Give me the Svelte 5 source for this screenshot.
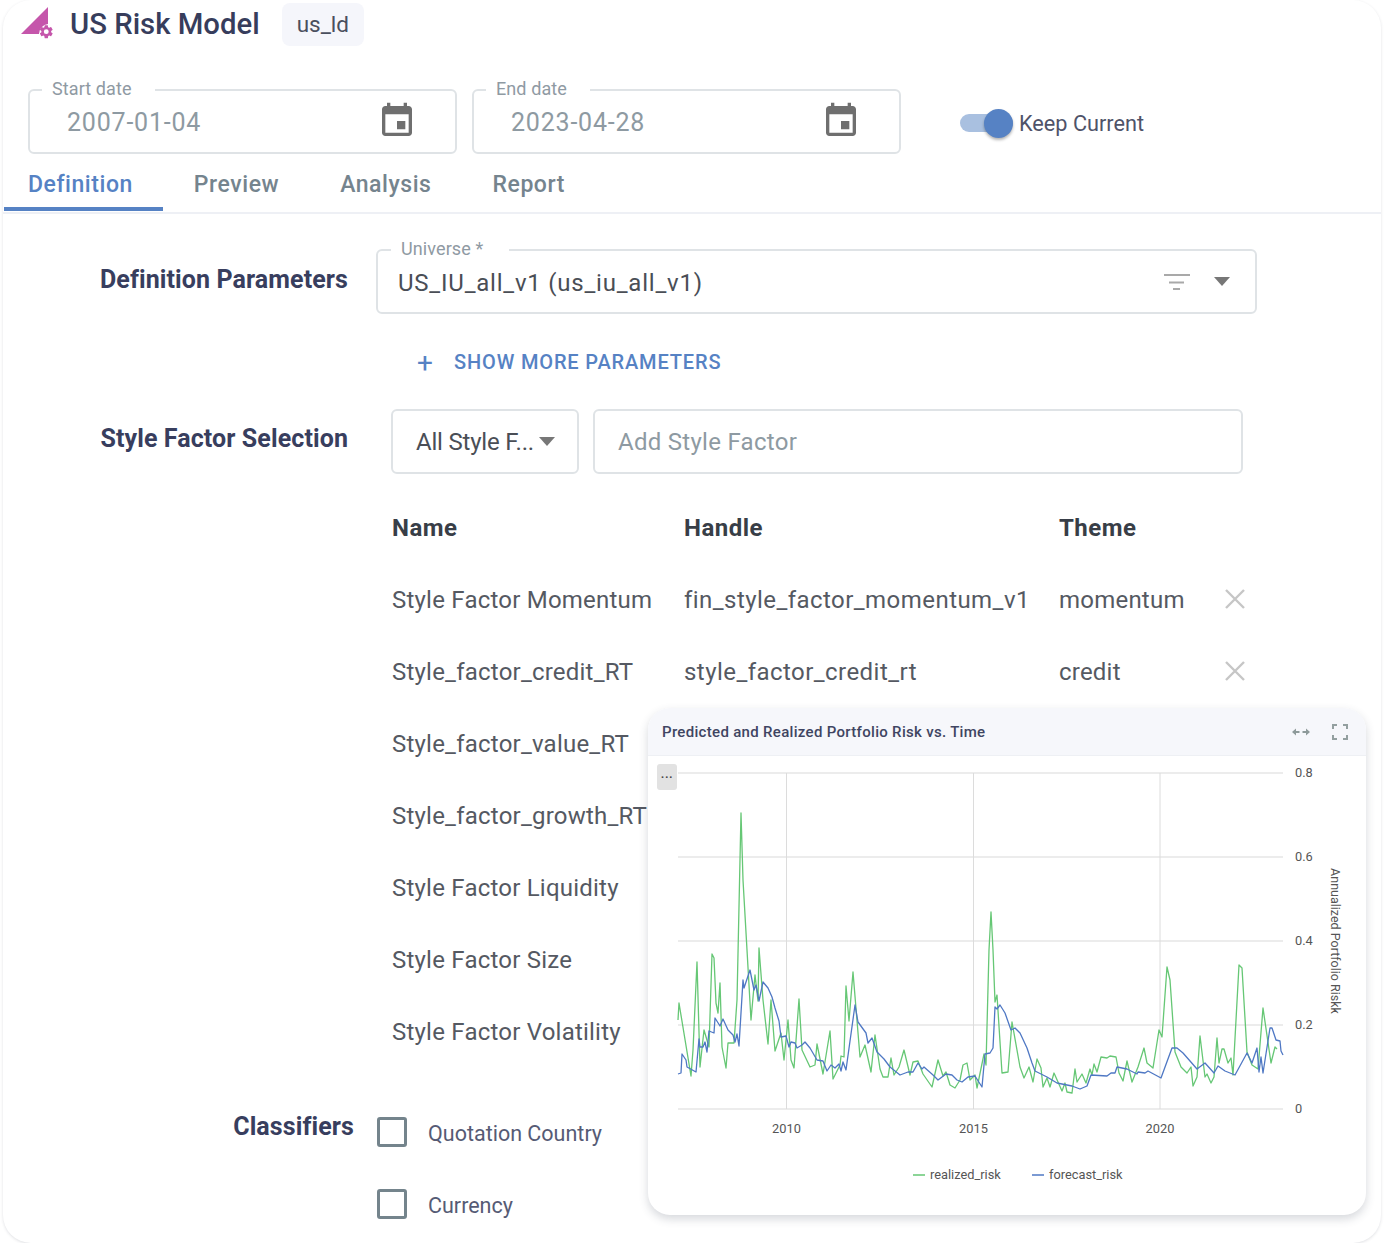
<script>
  const green = "678,1020 679,1003 691,1076 693,1050 697,962 700,1067 704,1030 709,1047 712,954 714,958 716,1003 718,1013 720,983 722,1047 726,1068 728,1043 734,1043 737,1000 741,813 743,880 747,950 751,1020 755,975 758,1001 759,948 763,1000 768,1044 771,1000 775,1051 781,1033 784,1060 788,1020 791,1060 794,1068 799,999 802,1050 810,1067 815,1065 817,1044 823,1074 830,1031 833,1079 840,1065 841,1056 844,1057 846,986 849,1021 853,972 860,1057 865,1045 871,1072 875,1035 880,1069 883,1077 888,1077 891,1058 894,1075 899,1067 904,1050 910,1075 913,1062 918,1061 923,1074 932,1087 938,1060 943,1076 946,1072 950,1085 955,1088 960,1080 963,1065 967,1063 970,1080 975,1075 977,1088 984,1054 986,1065 989,950 991,912 993,950 995,1002 997,995 1002,1073 1008,1072 1012,1022 1020,1067 1024,1078 1029,1067 1033,1082 1037,1059 1041,1068 1043,1087 1047,1078 1050,1087 1054,1073 1062,1091 1065,1083 1067,1092 1072,1093 1075,1069 1077,1082 1082,1074 1086,1083 1090,1069 1092,1075 1094,1064 1097,1072 1101,1057 1107,1058 1110,1056 1116,1057 1119,1073 1123,1081 1127,1061 1132,1082 1138,1067 1144,1048 1147,1063 1153,1068 1159,1030 1162,1037 1167,967 1170,980 1175,1052 1181,1067 1187,1073 1191,1067 1193,1086 1197,1077 1200,1036 1205,1077 1207,1074 1211,1083 1214,1077 1217,1038 1219,1063 1222,1049 1224,1049 1228,1063 1231,1058 1233,1075 1239,965 1242,968 1247,1052 1252,1065 1258,1069 1263,1008 1271,1063 1275,1047 1277,1049";
  const blue = "678,1074 681,1073 682,1054 686,1060 687,1067 696,1072 699,1039 700,1047 703,1047 705,1042 707,1052 709,1031 714,1033 715,1018 720,1026 723,1019 728,1030 733,1035 735,1042 737,1034 739,1046 743,980 744,988 750,970 754,990 756,985 759,1001 763,982 768,988 772,997 775,1008 779,1021 781,1037 786,1036 789,1047 791,1042 795,1043 797,1048 802,1045 805,1042 810,1048 817,1060 823,1061 827,1071 831,1065 835,1068 839,1064 841,1071 843,1062 846,1070 855,1005 858,1022 866,1033 868,1043 872,1038 877,1052 884,1059 890,1067 900,1075 908,1072 913,1072 918,1063 922,1069 924,1067 933,1075 938,1080 946,1074 952,1075 957,1080 962,1082 968,1077 975,1076 982,1087 985,1054 990,1053 993,1048 995,1007 997,1009 1000,1005 1005,1013 1011,1030 1015,1028 1020,1033 1027,1048 1032,1063 1035,1071 1047,1077 1057,1083 1072,1086 1080,1089 1087,1086 1091,1075 1107,1076 1111,1073 1115,1073 1117,1067 1127,1069 1137,1074 1138,1072 1145,1073 1148,1071 1161,1078 1172,1048 1177,1048 1183,1053 1197,1069 1205,1063 1214,1073 1218,1066 1225,1071 1235,1075 1247,1053 1252,1063 1257,1048 1259,1072 1261,1057 1263,1073 1270,1028 1272,1028 1276,1040 1280,1041 1281,1051 1283,1055";
  const hLines = [[773, "0.8"], [857, "0.6"], [941, "0.4"], [1025, "0.2"], [1109, "0"]];
  const vLines = [[786.5, "2010"], [973.5, "2015"], [1160, "2020"]];
  const rows = [
    ["Style Factor Momentum", "fin_style_factor_momentum_v1", "momentum"],
    ["Style_factor_credit_RT", "style_factor_credit_rt", "credit"],
    ["Style_factor_value_RT"],
    ["Style_factor_growth_RT"],
    ["Style Factor Liquidity"],
    ["Style Factor Size"],
    ["Style Factor Volatility"]
  ];
  const eventIcon = "M17 12h-5v5h5v-5zM16 1v2H8V1H6v2H5c-1.11 0-1.99.9-1.99 2L3 19c0 1.1.89 2 2 2h14c1.1 0 2-.9 2-2V5c0-1.1-.9-2-2-2h-1V1h-2zm3 18H5V8h14v11z";
  const gear = "M19.14 12.94c.04-.3.06-.61.06-.94 0-.32-.02-.64-.07-.94l2.03-1.58a.49.49 0 0 0 .12-.61l-1.92-3.32a.49.49 0 0 0-.59-.22l-2.39.96a7 7 0 0 0-1.62-.94l-.36-2.54a.48.48 0 0 0-.48-.41h-3.84a.47.47 0 0 0-.47.41l-.36 2.54a7.3 7.3 0 0 0-1.62.94l-2.39-.96a.48.48 0 0 0-.59.22L2.74 8.87a.47.47 0 0 0 .12.61l2.03 1.58c-.05.3-.09.63-.09.94s.02.64.07.94l-2.03 1.58a.49.49 0 0 0-.12.61l1.92 3.32c.12.22.37.29.59.22l2.39-.96c.5.38 1.03.7 1.62.94l.36 2.54c.05.24.24.41.48.41h3.84c.24 0 .44-.17.47-.41l.36-2.54a7 7 0 0 0 1.62-.94l2.39.96c.22.08.47 0 .59-.22l1.92-3.32a.47.47 0 0 0-.12-.61l-2.01-1.58zM12 15.6A3.6 3.6 0 1 1 12 8.4a3.6 3.6 0 0 1 0 7.2z";
</script>

<div class="card">
  <header class="head">
    <svg class="logo" viewBox="0 0 40 34" aria-hidden="true">
      <path d="M1 28 28 1v17a10 10 0 0 0-9 10z" fill="#c556ab" />
      <path d={gear} transform="translate(18.1 17.5) scale(.68)" fill="#c556ab" />
    </svg>
    <h1>US Risk Model</h1>
    <span class="badge">us_ld</span>
  </header>

  <div class="dates">
    {#each [["Start date", "2007-01-04"], ["End date", "2023-04-28"]] as d}
      <div class="date">
        <span class="float">{d[0]}</span>
        <span class="dval">{d[1]}</span>
        <svg class="cal" viewBox="0 0 24 24" aria-hidden="true"><path d={eventIcon} fill="#6f6f6f" /></svg>
      </div>
    {/each}
    <div class="keep">
      <span class="switch"><span class="thumb"></span></span>
      <span class="keep-label">Keep Current</span>
    </div>
  </div>

  <nav class="tabs">
    <span class="tab on">Definition</span>
    <span class="tab">Preview</span>
    <span class="tab">Analysis</span>
    <span class="tab">Report</span>
  </nav>

  <section class="sec-def">
    <h2>Definition Parameters</h2>
    <div class="universe">
      <span class="float">Universe *</span>
      <span class="uval">US_IU_all_v1 (us_iu_all_v1)</span>
      <svg class="filter" viewBox="0 0 26 18" aria-hidden="true">
        <path d="M0 2h26M5 9.500h15M9 16h7" stroke="#a9a9a9" stroke-width="2.200" />
      </svg>
      <span class="caret"></span>
    </div>
  </section>

  <div class="more"><span class="plus">+</span><span>SHOW MORE PARAMETERS</span></div>

  <section class="sec-style">
    <h2>Style Factor Selection</h2>
    <div class="sel"><span>All Style F...</span><span class="caret"></span></div>
    <div class="add">Add Style Factor</div>
  </section>

  <div class="table">
    <div class="tr th"><span>Name</span><span>Handle</span><span>Theme</span></div>
    {#each rows as r}
      <div class="tr">
        <span class="nm">{r[0]}</span>
        <span class="hd">{r[1] ?? ""}</span>
        <span>{r[2] ?? ""}</span>
        {#if r[1]}
          <svg class="x" viewBox="0 0 20 20" aria-hidden="true"><path d="M1 1l18 18M19 1 1 19" stroke="#c6c6c6" stroke-width="2.400" /></svg>
        {/if}
      </div>
    {/each}
  </div>

  <section class="sec-class">
    <h2>Classifiers</h2>
    <div class="checks">
      <label class="chk"><span class="box"></span><span class="chk-label">Quotation Country</span></label>
      <label class="chk"><span class="box"></span><span class="chk-label">Currency</span></label>
    </div>
  </section>

  <aside class="chart">
    <div class="chart-head">
      <span class="chart-title">Predicted and Realized Portfolio Risk vs. Time</span>
      <svg class="arrows" viewBox="0 0 18 8" aria-hidden="true">
        <path d="M0 4 4 .500V3h3.500v2H4v2.500zM18 4l-4-3.500V3h-3.500v2H14v2.500z" fill="#8e9a9a" />
      </svg>
      <svg class="full" viewBox="0 0 16 16" aria-hidden="true">
        <path d="M1 5V1h4M11 1h4v4M1 11v4h4M15 11v4h-4" fill="none" stroke="#94a0a0" stroke-width="2" />
      </svg>
    </div>
    <div class="plot">
      <button class="dots" type="button">...</button>
      <svg class="plot-svg" viewBox="648 756 718 459" aria-label="Line chart of realized and forecast risk">
        {#each hLines as l}
          <line x1="678" x2="1283" y1={l[0]} y2={l[0]} stroke="#e6e6e6" stroke-width="1.500" />
          <text x="1295" y={l[0] + 4} class="tick">{l[1]}</text>
        {/each}
        {#each vLines as l}
          <line x1={l[0]} x2={l[0]} y1="773" y2="1109" stroke="#dcdcdc" />
          <text x={l[0]} y="1133" class="tick" text-anchor="middle">{l[1]}</text>
        {/each}
        <polyline points={green} fill="none" stroke="#66c775" stroke-width="1.300" stroke-linejoin="round" />
        <polyline points={blue} fill="none" stroke="#4f78c4" stroke-width="1.300" stroke-linejoin="round" />
        <text transform="translate(1331 941) rotate(90)" class="tick axis" text-anchor="middle">Annualized Portfolio Riskk</text>
        <line x1="913" x2="925" y1="1175" y2="1175" stroke="#66c775" stroke-width="1.500" />
        <text x="930" y="1179" class="tick">realized_risk</text>
        <line x1="1032" x2="1044" y1="1175" y2="1175" stroke="#4f78c4" stroke-width="1.500" />
        <text x="1049" y="1179" class="tick">forecast_risk</text>
      </svg>
    </div>
  </aside>
</div>

<style>
  :global(body) {
    margin: 0;
    background: #fff;
  }
  .card {
    position: relative;
    box-sizing: border-box;
    width: 1378px;
    height: 1243px;
    margin-left: 3px;
    border-radius: 28px;
    background: #fff;
    box-shadow: 0 1px 3px rgba(60, 70, 90, 0.16);
    overflow: hidden;
    font-family: Roboto, "Liberation Sans", sans-serif;
    font-size: 24px;
    color: #555962;
  }
  .head {
    display: flex;
    align-items: center;
    height: 48px;
    padding-left: 17px;
  }
  .logo {
    width: 40px;
    height: 34px;
    margin-top: -2px;
  }
  h1 {
    margin: 0 0 0 10px;
    font-size: 29.300px;
    font-weight: 500;
    color: #373d5c;
  }
  .badge {
    margin-left: 22px;
    padding: 0 15px;
    height: 43px;
    line-height: 43px;
    border-radius: 8px;
    background: #f5f6fb;
    font-size: 22.500px;
    color: #4a4f5e;
  }
  .dates {
    display: flex;
    align-items: flex-start;
    gap: 15px;
    margin-top: 41px;
    padding-left: 25px;
  }
  .date {
    position: relative;
    box-sizing: border-box;
    display: flex;
    align-items: center;
    justify-content: space-between;
    width: 429px;
    height: 65px;
    padding: 2px 38px 0 37px;
    border: 2px solid #dfe3e6;
    border-radius: 6px;
  }
  .float {
    position: absolute;
    top: -13px;
    left: 12px;
    padding: 0 23px 0 10px;
    background: #fff;
    font-size: 18px;
    line-height: 22px;
    color: #8f9aa3;
    letter-spacing: 0.1px;
  }
  .dval {
    font-size: 25px;
    color: #8e9aa2;
    letter-spacing: 0.8px;
  }
  .cal {
    width: 40px;
    height: 40px;
    margin-top: -3px;
  }
  .keep {
    display: flex;
    align-items: center;
    height: 67px;
    margin-left: 44px;
    gap: 6px;
    font-size: 21.700px;
    color: #4f5369;
  }
  .keep-label {
    padding-top: 2px;
  }
  .switch {
    position: relative;
    display: block;
    width: 53px;
    height: 18px;
    border-radius: 9px;
    background: #a9c0e0;
  }
  .thumb {
    position: absolute;
    top: -5px;
    right: 0;
    width: 29px;
    height: 29px;
    border-radius: 50%;
    background: #5682c4;
    box-shadow: 0 2px 3px rgba(0, 0, 0, 0.3);
  }
  .tabs {
    display: flex;
    margin-top: 10px;
    padding-left: 1px;
    height: 46px;
    border-bottom: 2px solid #eef0f5;
  }
  .tab {
    box-sizing: border-box;
    height: 45px;
    padding: 3px 30.500px 0;
    font-size: 23px;
    line-height: 32px;
    font-weight: 500;
    letter-spacing: 0.55px;
    color: #75848e;
  }
  .tab.on {
    padding-left: 24px;
    color: #5682c4;
    border-bottom: 4px solid #5682c4;
  }
  h2 {
    margin: 0;
    width: 345px;
    text-align: right;
    font-size: 25px;
    font-weight: 700;
    letter-spacing: 0.1px;
    color: #383e5e;
    flex: none;
  }
  .sec-def {
    display: flex;
    margin-top: 35px;
  }
  .sec-def h2 {
    margin-top: 16px;
  }
  .universe {
    position: relative;
    box-sizing: border-box;
    display: flex;
    align-items: center;
    width: 881px;
    height: 65px;
    margin-left: 28px;
    padding: 0 25px 0 20px;
    border: 2px solid #dfe3e6;
    border-radius: 6px;
    color: #4a4e56;
  }
  .uval {
    letter-spacing: 0.78px;
    padding-top: 3px;
  }
  .universe .float {
    left: 13px;
    padding-right: 26px;
  }
  .filter {
    width: 26px;
    height: 18px;
    margin-left: auto;
  }
  .caret {
    display: block;
    flex: none;
    width: 0;
    height: 0;
    border-left: 8px solid transparent;
    border-right: 8px solid transparent;
    border-top: 9px solid #777;
  }
  .universe .caret {
    margin-left: 24px;
  }
  .more {
    display: flex;
    align-items: center;
    height: 30px;
    margin: 33px 0 0 414px;
    font-size: 20px;
    font-weight: 500;
    letter-spacing: 0.85px;
    color: #5682c4;
  }
  .plus {
    width: 37px;
    font-size: 28px;
    font-weight: 400;
  }
  .sec-style {
    display: flex;
    margin-top: 32px;
  }
  .sec-style h2 {
    margin-top: 15px;
  }
  .sel {
    box-sizing: border-box;
    display: flex;
    align-items: center;
    justify-content: space-between;
    width: 188px;
    height: 65px;
    margin-left: 43px;
    padding: 0 22px 0 23px;
    border: 2px solid #dfe3e6;
    border-radius: 6px;
    color: #4a4e56;
    letter-spacing: -0.2px;
  }
  .add {
    box-sizing: border-box;
    display: flex;
    align-items: center;
    width: 650px;
    height: 65px;
    margin-left: 14px;
    padding-left: 23px;
    border: 2px solid #dfe3e6;
    border-radius: 6px;
    color: #8e9aa2;
    letter-spacing: 0.28px;
  }
  .table {
    margin: 18px 0 0 389px;
  }
  .tr {
    position: relative;
    display: grid;
    grid-template-columns: 292px 375px 1fr;
    align-items: center;
    height: 72px;
    white-space: nowrap;
    letter-spacing: 0.22px;
  }
  .hd {
    letter-spacing: 0.45px;
  }
  .th {
    font-weight: 700;
    color: #383e47;
    letter-spacing: 0.5px;
  }
  .x {
    position: absolute;
    left: 833px;
    top: 25px;
    width: 20px;
    height: 20px;
  }
  .sec-class {
    display: flex;
    margin-top: 44px;
  }
  .sec-class h2 {
    width: 351px;
  }
  .checks {
    display: flex;
    flex-direction: column;
    gap: 42px;
    margin: 5px 0 0 23px;
  }
  .chk {
    display: flex;
    align-items: center;
    gap: 21px;
    height: 30px;
    font-size: 21.500px;
    color: #565b75;
  }
  .chk-label {
    padding-top: 2px;
  }
  .box {
    box-sizing: border-box;
    width: 30px;
    height: 30px;
    border: 3.500px solid #74848c;
    border-radius: 3px;
  }
  .chart {
    position: absolute;
    left: 645px;
    top: 708px;
    width: 718px;
    height: 507px;
    border-radius: 22px;
    background: #fff;
    box-shadow: 0 4px 10px rgba(50, 60, 80, 0.2);
    overflow: hidden;
  }
  .chart-head {
    box-sizing: border-box;
    display: flex;
    align-items: center;
    height: 48px;
    padding: 0 18px 0 14px;
    background: #f6f7fb;
    border-bottom: 1px solid #eef0f4;
    font-size: 15px;
    font-weight: 500;
    color: #3f4562;
  }
  .chart-title {
    letter-spacing: 0.31px;
  }
  .arrows {
    width: 18px;
    height: 8px;
    margin-left: auto;
  }
  .full {
    width: 16px;
    height: 16px;
    margin-left: 22px;
  }
  .plot {
    position: relative;
    height: 459px;
  }
  .plot-svg {
    display: block;
    width: 718px;
    height: 459px;
  }
  .tick {
    font-size: 12.800px;
    fill: #555;
  }
  .axis {
    font-size: 12.500px;
  }
  .dots {
    position: absolute;
    left: 9px;
    top: 8px;
    width: 20px;
    height: 26px;
    padding: 0 0 6px;
    border: 0;
    border-radius: 3px;
    background: #e2e2e2;
    font: 500 13px/14px Roboto, sans-serif;
    letter-spacing: 0.5px;
    color: #444;
  }
</style>
